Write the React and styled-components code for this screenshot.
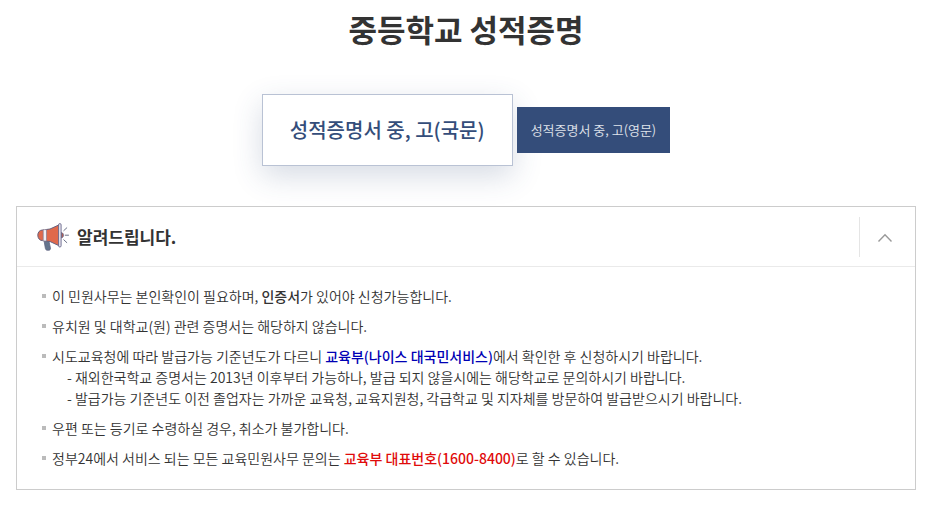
import React, { useState } from "react";
import styled, { createGlobalStyle } from "styled-components";

export default function App() {
  const [open, setOpen] = useState(true);

  return (
    <>
      <GlobalStyle />
      <Page>
        <Title>중등학교 성적증명</Title>

        <TabList>
          <TabButton type="button" $active>
            성적증명서 중, 고(국문)
          </TabButton>
          <TabButton type="button">성적증명서 중, 고(영문)</TabButton>
        </TabList>

        <Notice>
          <NoticeHeader>
            <Megaphone />
            <NoticeTitle>알려드립니다.</NoticeTitle>
            <ToggleButton
              type="button"
              aria-label="알려드립니다"
              aria-expanded={open}
              onClick={() => setOpen(!open)}
            >
              <Chevron $open={open} viewBox="0 0 16 10" aria-hidden="true">
                <path d="M1.500 8.500 8 1.800l6.500 6.700" />
              </Chevron>
            </ToggleButton>
          </NoticeHeader>

          {open && (
            <NoticeList>
              <NoticeItem>
                이 민원사무는 본인확인이 필요하며, <Strong>인증서</Strong>가
                있어야 신청가능합니다.
              </NoticeItem>
              <NoticeItem>
                유치원 및 대학교(원) 관련 증명서는 해당하지 않습니다.
              </NoticeItem>
              <NoticeItem>
                시도교육청에 따라 발급가능 기준년도가 다르니{" "}
                <NoticeLink href="#neis">교육부(나이스 대국민서비스)</NoticeLink>
                에서 확인한 후 신청하시기 바랍니다.
                <SubText>
                  - 재외한국학교 증명서는 2013년 이후부터 가능하나, 발급 되지
                  않을시에는 해당학교로 문의하시기 바랍니다.
                </SubText>
                <SubText>
                  - 발급가능 기준년도 이전 졸업자는 가까운 교육청, 교육지원청,
                  각급학교 및 지자체를 방문하여 발급받으시기 바랍니다.
                </SubText>
              </NoticeItem>
              <NoticeItem>
                우편 또는 등기로 수령하실 경우, 취소가 불가합니다.
              </NoticeItem>
              <NoticeItem>
                정부24에서 서비스 되는 모든 교육민원사무 문의는{" "}
                <Strong $color="#e00b0b">교육부 대표번호(1600-8400)</Strong>로
                할 수 있습니다.
              </NoticeItem>
            </NoticeList>
          )}
        </Notice>
      </Page>
    </>
  );
}

function Megaphone() {
  return (
    <MegaphoneIcon viewBox="0 0 32 28" aria-hidden="true">
      <path
        d="M7 17.500h4.800l1.600 7.400c.3 1.500-.6 2.400-2 2.400h-.8c-1.200 0-2-.7-2.200-1.800z"
        fill="#64748d"
        stroke="#5f6380"
        strokeWidth="0.800"
      />
      <path
        d="M7 7H5.500C2.700 7 .8 9.200.8 12.200s1.900 5.400 4.700 5.400H7z"
        fill="#e0694c"
        stroke="#67607c"
      />
      <path
        d="M22.200 1.800v21l-9.200-4.300-4.500-.5V6.600l4.500-.6z"
        fill="#e0694c"
        stroke="#67607c"
      />
      <path
        d="M6.200 6.600h3.300v11.400H6.200z"
        fill="#f1eef3"
        stroke="#85798e"
        strokeWidth="0.700"
      />
      <path d="M24.400 9.600c2.600.3 2.600 5 0 5.300z" fill="#c2604f" stroke="#67607c" />
      <rect
        x="21.600"
        y=".6"
        width="2.500"
        height="23.400"
        rx="1.200"
        fill="#eceaf0"
        stroke="#67658a"
        strokeWidth="0.900"
      />
      <path
        d="M28.200 12.200h3.300M26.800 7.600l3-2.800M26.800 16.800l3 2.800"
        fill="none"
        stroke="#6b7288"
        strokeLinecap="round"
      />
    </MegaphoneIcon>
  );
}

const GlobalStyle = createGlobalStyle`
  * {
    box-sizing: border-box;
  }

  body {
    margin: 0;
    background: #fff;
    color: #333;
    font-family: "Noto Sans CJK KR", sans-serif;
    font-size: 14px;
    font-weight: 350;
    line-height: 21px;
  }

  button {
    font-family: inherit;
    cursor: pointer;
  }
`;

const Page = styled.main`
  padding: 5px 14px 20px 16px;
`;

const Title = styled.h1`
  margin: 0;
  font-size: 31px;
  font-weight: 700;
  line-height: 48px;
  text-align: center;
`;

const TabList = styled.div`
  display: flex;
  justify-content: center;
  align-items: center;
  gap: 4px;
  margin: 41px 0 40px;
`;

const TabButton = styled.button`
  padding: ${({ $active }) => ($active ? "20px 27px" : "12px 13px")};
  border: 1px solid ${({ $active }) => ($active ? "#b9c2d4" : "#344d7a")};
  background: ${({ $active }) => ($active ? "#fff" : "#344d7a")};
  color: ${({ $active }) => ($active ? "#344d7a" : "#e1e5ec")};
  font-size: ${({ $active }) => ($active ? "20px" : "13px")};
  font-weight: ${({ $active }) => ($active ? 500 : 350)};
  line-height: ${({ $active }) => ($active ? "30px" : "20px")};
  box-shadow: ${({ $active }) =>
    $active ? "0 10px 30px rgba(52, 77, 122, 0.2)" : "none"};
`;

const Notice = styled.section`
  border: 1px solid #ccc;
`;

const NoticeHeader = styled.div`
  display: flex;
  align-items: center;
  height: 60px;
  padding-left: 20px;
  border-bottom: 1px solid #eaeaea;
`;

const MegaphoneIcon = styled.svg`
  width: 32px;
  height: 28px;
`;

const NoticeTitle = styled.h2`
  flex: 1;
  margin: 0 0 0 8px;
  font-size: 17px;
  font-weight: 700;
  line-height: 24px;
`;

const ToggleButton = styled.button`
  display: flex;
  justify-content: center;
  align-items: center;
  width: 56px;
  height: 40px;
  padding: 2px 6px 0 0;
  border: 0;
  border-left: 1px solid #e5e5e5;
  background: none;
`;

const Chevron = styled.svg`
  width: 16px;
  height: 10px;
  fill: none;
  stroke: #999;
  stroke-width: 1.4;
  transform: ${({ $open }) => ($open ? "none" : "rotate(180deg)")};
`;

const NoticeList = styled.ul`
  display: flex;
  flex-direction: column;
  gap: 9px;
  margin: 0;
  padding: 19px 25px 20px;
  list-style: none;
`;

const NoticeItem = styled.li`
  padding-left: 10px;
  background: linear-gradient(#bbb, #bbb) no-repeat 0 8px / 4px 4px;
`;

const Strong = styled.strong`
  color: ${({ $color }) => $color || "inherit"};
  font-weight: 500;
`;

const NoticeLink = styled.a`
  color: #0000b4;
  font-weight: 500;
  text-decoration: none;
`;

const SubText = styled.div`
  padding-left: 15px;
`;
